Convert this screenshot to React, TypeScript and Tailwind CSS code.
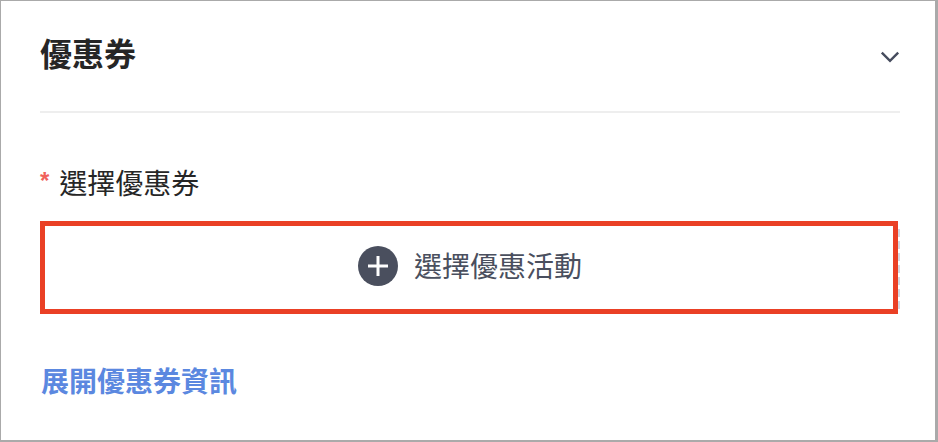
import { useState } from 'react';

export default function App() {
  const [open, setOpen] = useState(true);

  return (
    <main className="min-h-screen border-t border-r-3 border-b-2 border-l border-[#aaaaaa] bg-white pr-[35px] pl-[39px] font-['Liberation_Sans','Noto_Sans_CJK_TC',sans-serif] text-[#262626]">
      {/* Header */}
      <header className="flex items-center justify-between border-b-2 border-[#eeeeee] pt-[34px] pb-9">
        <h1 className="text-[32px] leading-10 font-bold">優惠券</h1>
        <button
          type="button"
          aria-label="優惠券"
          aria-expanded={open}
          onClick={() => setOpen(!open)}
          className="pt-1 text-[#464c5e]"
        >
          <svg width="20" height="14" viewBox="0 0 20 14" fill="none" stroke="currentColor" strokeWidth="2.4">
            <path d="M1.8 2.6 10 10.8l8.2-8.2" />
          </svg>
        </button>
      </header>

      {open && (
        <section className="pt-[54px] pb-[38px]">
          <label htmlFor="coupon" className="flex items-start gap-2.5 text-[28px] leading-9">
            <span className="text-[24px] leading-7 font-bold text-[#f0625c]">*</span>
            選擇優惠券
          </label>

          <div className="relative mt-[18px]">
            {/* Dashed edge on the right, 8px dashes with 4px gaps */}
            <button
              id="coupon"
              type="button"
              className="flex h-[90px] w-full items-center justify-center gap-4 bg-[repeating-linear-gradient(to_bottom,#d5d8e2_0_8px,transparent_8px_12px)] bg-[length:2px_80px] bg-[position:right_8px] bg-no-repeat text-[28px] leading-9 text-[#4a4f5e]"
            >
              <svg width="40" height="40" viewBox="0 0 40 40">
                <circle cx="20" cy="20" r="20" fill="#4a4f5e" />
                <path d="M10 20h20M20 10v20" stroke="#ffffff" strokeWidth="3" />
              </svg>
              <span className="pt-1">選擇優惠活動</span>
            </button>
            {/* Highlight frame */}
            <div className="pointer-events-none absolute top-0 right-[2px] -bottom-[3px] left-0 border-5 border-[#ea4025]" />
          </div>

          <a href="#info" className="mt-[54px] ml-px inline-block text-[28px] leading-9 font-bold text-[#5b88e0]">
            展開優惠券資訊
          </a>
        </section>
      )}
    </main>
  );
}
